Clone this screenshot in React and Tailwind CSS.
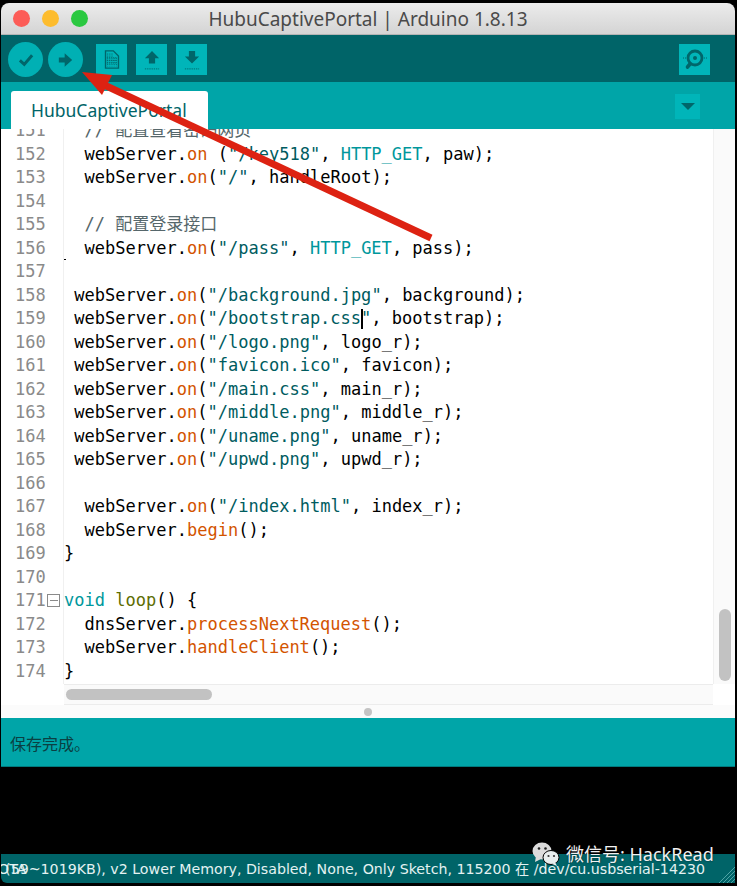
const F = ({ children }) => <span className="text-[#d35400]">{children}</span>;
const S = ({ children }) => <span className="text-[#005c5f]">{children}</span>;
const T = ({ children }) => <span className="text-[#00979c]">{children}</span>;
const C = ({ children }) => <span className="text-[#56676b]">{children}</span>;
const G = ({ children }) => <span className="text-[#5e6d03]">{children}</span>;

const route = (indent, path, handler) => (
  <>
    {indent}webServer.<F>on</F>(<S>"{path}"</S>, {handler});
  </>
);

const lines = [
  [151, <>  <C>// 配置查看密码网页</C></>],
  [152, <>  webServer.<F>on</F> (<S>"/key518"</S>, <T>HTTP_GET</T>, paw);</>],
  [153, route("  ", "/", "handleRoot")],
  [154, ""],
  [155, <>  <C>// 配置登录接口</C></>],
  [156, <>  webServer.<F>on</F>(<S>"/pass"</S>, <T>HTTP_GET</T>, pass);</>],
  [157, <span className="relative block"><span className="absolute top-[-1px] left-0 h-px w-[2px] bg-black" /></span>],
  [158, route(" ", "/background.jpg", "background")],
  [159, <> webServer.<F>on</F>(<S>"/bootstrap.css<span className="relative"><span className="absolute top-[1px] left-0 h-[20px] w-[2px] bg-black" /></span>"</S>, bootstrap);</>],
  [160, route(" ", "/logo.png", "logo_r")],
  [161, route(" ", "favicon.ico", "favicon")],
  [162, route(" ", "/main.css", "main_r")],
  [163, route(" ", "/middle.png", "middle_r")],
  [164, route(" ", "/uname.png", "uname_r")],
  [165, route(" ", "/upwd.png", "upwd_r")],
  [166, ""],
  [167, route("  ", "/index.html", "index_r")],
  [168, <>  webServer.<F>begin</F>();</>],
  [169, "}"],
  [170, ""],
  [171, <><T>void</T> <G>loop</G>() {"{"}</>],
  [172, <>  dnsServer.<F>processNextRequest</F>();</>],
  [173, <>  webServer.<F>handleClient</F>();</>],
  [174, "}"],
];

const ToolSquare = ({ children }) => (
  <div className="flex h-[31px] w-[31px] items-center justify-center bg-[#00b5b9]">{children}</div>
);

const ToolCircle = ({ children }) => (
  <div className="flex h-[35px] w-[35px] items-center justify-center rounded-full bg-[#00b0b4]">{children}</div>
);

const App = () => {
  return (
    <div className="relative h-[886px] w-[737px] overflow-hidden bg-black pt-[3px] pr-[2px] pb-[3px] pl-[1px] font-['Noto_Sans','Noto_Sans_CJK_SC',sans-serif]">
      <div className="flex h-full flex-col overflow-hidden rounded-t-[8px] rounded-bl-[6px]">
        {/* title bar */}
        <div className="relative flex h-[32px] shrink-0 items-center justify-center border-b border-[#b4b4b4] bg-gradient-to-b from-[#ececec] to-[#d4d4d4] pt-[1px] text-[19px] text-[#4a4a4a]">
          <div className="absolute top-[7px] left-[12px] flex gap-[12px]">
            <span className="h-[17px] w-[17px] rounded-full bg-[#fc5c57]" />
            <span className="h-[17px] w-[17px] rounded-full bg-[#fdbc2e]" />
            <span className="h-[17px] w-[17px] rounded-full bg-[#2ac840]" />
          </div>
          <span>HubuCaptivePortal | Arduino 1.8.13</span>
        </div>

        {/* toolbar */}
        <div className="flex h-[47px] shrink-0 items-center bg-[#006468] pt-[2px] pl-[7px]">
          <ToolCircle>
            <svg width="16" height="14" viewBox="0 0 18 16" fill="none" stroke="#00666a" strokeWidth="3.4">
              <path d="M2 8.500 L7 13 L16 2.500" />
            </svg>
          </ToolCircle>
          <div className="ml-[5px]">
            <ToolCircle>
              <svg width="15" height="14" viewBox="0 0 18 16" fill="#00666a">
                <path d="M1 5h7V0l9 8-9 8v-5H1z" />
              </svg>
            </ToolCircle>
          </div>
          <div className="ml-[13px] flex gap-[9px]">
            <ToolSquare>
              <svg width="16" height="19" viewBox="0 0 18 22" fill="none" stroke="#00666a">
                <path d="M1.500 1h9l6 6v14h-15z" strokeWidth="1.600" />
                <path d="M4 4v15M6.500 4v15M9 4v15M11.500 9v10M14 9v10M3 9h12M3 12h12M3 15h12" strokeWidth="1" strokeDasharray="1.400 1" />
              </svg>
            </ToolSquare>
            <ToolSquare>
              <svg width="16" height="20" viewBox="0 0 18 22" fill="#00666a">
                <path d="M9 1l8 8h-4.500v6h-7V9H1z" />
                <path d="M1 21h16" stroke="#00666a" strokeWidth="1" strokeDasharray="1.500 1" />
              </svg>
            </ToolSquare>
            <ToolSquare>
              <svg width="16" height="20" viewBox="0 0 18 22" fill="#00666a">
                <path d="M5.500 1h7v6H17l-8 8-8-8h4.500z" />
                <path d="M1 21h16" stroke="#00666a" strokeWidth="1" strokeDasharray="1.500 1" />
              </svg>
            </ToolSquare>
          </div>
          <div className="ml-auto mr-[25px]">
            <ToolSquare>
              <svg width="26" height="24" viewBox="0 0 26 24" fill="none" stroke="#00666a">
                <circle cx="13" cy="10" r="7" strokeWidth="2.800" />
                <circle cx="13" cy="10" r="2" fill="#00666a" stroke="none" />
                <path d="M8 16l-2.500 3" strokeWidth="3.600" strokeLinecap="round" />
                <path d="M1 10h3M22 10h3" strokeWidth="1" strokeDasharray="1 1" />
              </svg>
            </ToolSquare>
          </div>
        </div>

        {/* tab bar */}
        <div className="flex h-[47px] shrink-0 items-end justify-between bg-[#00a5a8] pl-[10px]">
          <div className="flex h-[38px] w-[197px] items-center rounded-t-[3px] bg-white pt-[1px] pl-[20px] text-[17.500px] text-[#006468]">
            HubuCaptivePortal
          </div>
          <div className="mr-[35px] mb-[10px] flex h-[25px] w-[25px] items-center justify-center bg-[#00b5b9]">
            <svg width="14" height="7" viewBox="0 0 14 7" fill="#00666a">
              <path d="M0 0h14L7 7z" />
            </svg>
          </div>
        </div>

        {/* editor */}
        <div className="flex h-[555px] shrink-0 overflow-hidden bg-white">
          <div className="mt-[-10px] w-[63px] shrink-0 border-r border-[#f0f0f0] font-['DejaVu_Sans_Mono','Noto_Sans_CJK_SC',monospace] text-[17px] leading-[23.5px] text-[#8a8a8a]">
            {lines.map(([n]) => (
              <div key={n} className="relative h-[23.5px] pl-[14px]">
                {n}
                {n === 171 && (
                  <span className="absolute top-[5px] left-[46px] flex h-[13px] w-[13px] items-center justify-center border border-[#8a8a8a]">
                    <span className="h-px w-[8px] bg-[#8a8a8a]" />
                  </span>
                )}
              </div>
            ))}
          </div>
          <div className="mt-[-10px] min-w-0 flex-1 font-['DejaVu_Sans_Mono','Noto_Sans_CJK_SC',monospace] text-[17.030px] leading-[23.5px] whitespace-pre text-black">
            {lines.map(([n, code]) => (
              <div key={n} className="h-[23.5px]">{code}</div>
            ))}
          </div>
          <div className="relative w-[22px] shrink-0 border-l border-[#f0f0f0] bg-[#fafafa]">
            <div className="absolute top-[480px] left-[5px] h-[72px] w-[12px] rounded-full bg-[#c2c2c2]" />
          </div>
        </div>

        {/* horizontal scroll bar */}
        <div className="flex h-[21px] shrink-0 bg-white">
          <div className="ml-[63px] flex w-[649px] items-center border-y border-[#ececec] bg-[#fafafa] pl-[2px]">
            <div className="h-[11px] w-[146px] rounded-full bg-[#c2c2c2]" />
          </div>
        </div>

        {/* splitter */}
        <div className="flex h-[13px] shrink-0 items-center justify-center bg-[#fbfbfb]">
          <span className="h-[8px] w-[8px] rounded-full bg-[#c4c4c4]" />
        </div>

        {/* message bar */}
        <div className="flex h-[49px] shrink-0 items-center border-b border-[#007a7d] bg-[#00a5a8] pt-[4px] pl-[9px] text-[16px] text-[#0a3f42]">
          保存完成。
        </div>

        {/* console */}
        <div className="min-h-0 flex-1 bg-black" />

        {/* status bar */}
        <div className="relative flex h-[29px] shrink-0 items-center justify-end overflow-hidden bg-[#006468] pt-[3px] pr-[30px] font-['DejaVu_Sans','Noto_Sans_CJK_SC',sans-serif] text-[14.200px] whitespace-nowrap text-[#e4f2f2]">
          <span className="absolute top-[5px] left-[-3px]">OTA</span>
          <span>(59~1019KB), v2 Lower Memory, Disabled, None, Only Sketch, 115200 在 /dev/cu.usbserial-14230</span>
          <svg className="absolute right-0 bottom-0" width="16" height="16" viewBox="0 0 16 16" stroke="#4fa3a5" strokeWidth="1">
            <path d="M16 0L0 16M16 4L4 16M16 8L8 16M16 12L12 16" />
          </svg>
        </div>
      </div>

      {/* red annotation arrow */}
      <svg className="pointer-events-none absolute top-0 left-0" width="737" height="886" viewBox="0 0 737 886">
        <path d="M100 83L431 238" stroke="#dd2212" strokeWidth="7" />
        <path d="M82 72L112 75L102 95z" fill="#dd2212" />
      </svg>

      {/* wechat watermark */}
      <div className="absolute top-[842px] left-[532px] flex items-center gap-[6px] font-['Noto_Sans','Noto_Sans_CJK_SC',sans-serif] text-[18px] leading-[24px] text-[#f2f2f2] [text-shadow:0_0_2px_rgba(0,0,0,0.7)]">
        <svg width="28" height="24" viewBox="0 0 28 24" className="mt-[-1px]">
          <ellipse cx="10" cy="9" rx="9.500" ry="8.500" fill="#dcdcdc" />
          <path d="M4 14l-1 6 6-3z" fill="#dcdcdc" />
          <ellipse cx="19" cy="15.500" rx="8" ry="7" fill="#e8eeee" stroke="#000" strokeWidth="1" />
          <path d="M23 20l2 4-5-2z" fill="#e8eeee" />
          <circle cx="7" cy="6.500" r="1.300" fill="#222" />
          <circle cx="13.500" cy="6.500" r="1.300" fill="#222" />
          <circle cx="16.500" cy="14" r="1.100" fill="#333" />
          <circle cx="22" cy="14" r="1.100" fill="#333" />
        </svg>
        <span>微信号: HackRead</span>
      </div>
    </div>
  );
};

export default App;
